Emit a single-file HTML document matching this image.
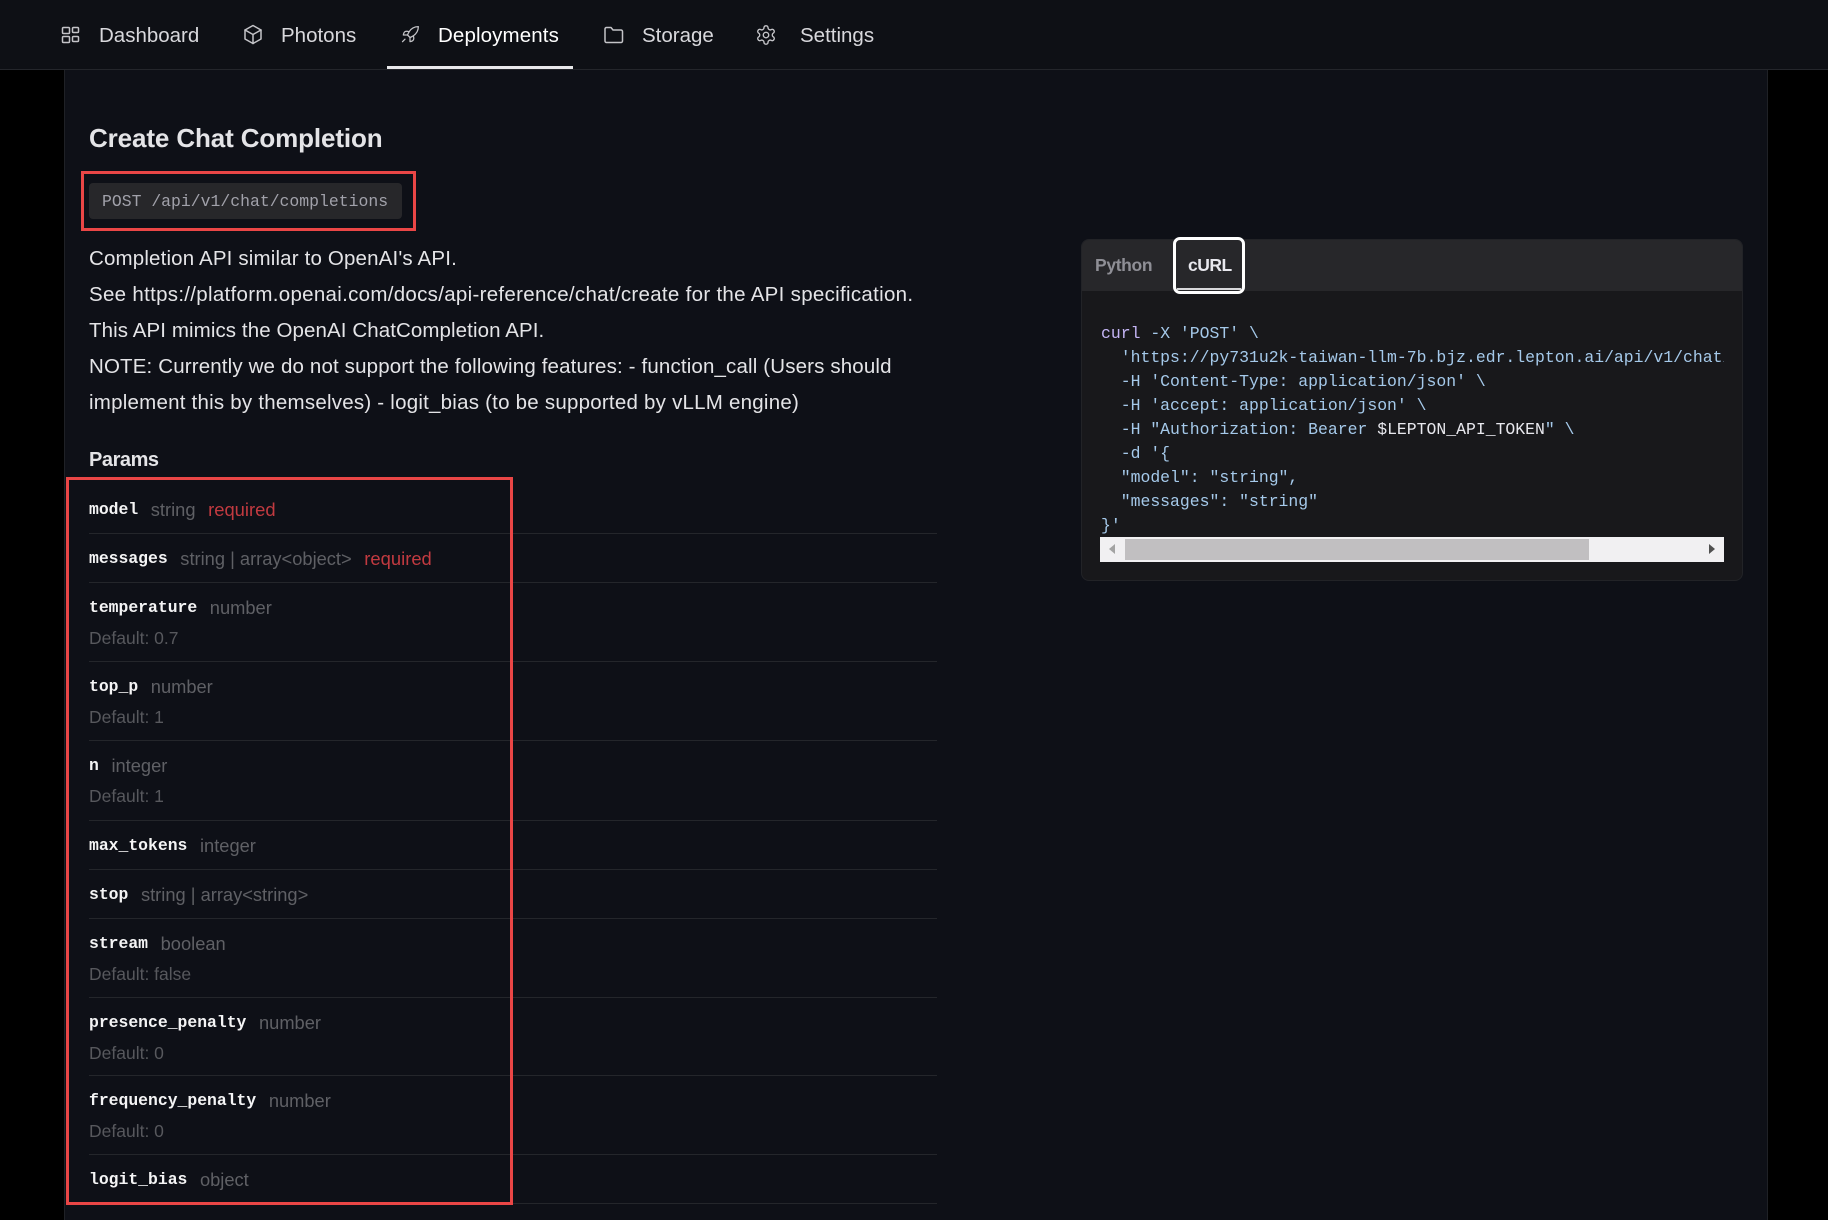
<!DOCTYPE html>
<html lang="en"><head><meta charset="utf-8"><title>Create Chat Completion</title>
<style>
*{box-sizing:border-box;margin:0;padding:0}
html,body{width:1828px;height:1220px;overflow:hidden;background:#000;font-family:"Liberation Sans",sans-serif;color:#e4e4e7}
#panel{position:absolute;left:64px;top:69px;width:1704px;height:1151px;background:#0e1017;border-left:1px solid #1f2126;border-right:1px solid #1f2126}
header{position:absolute;left:0;top:0;width:1828px;height:70px;background:#0e1015;border-bottom:1px solid #24262b}
nav a{position:absolute;top:23px;font-size:20.5px;line-height:26px;color:#d8d8dc;white-space:nowrap}
nav a.on{color:#fff}
nav svg{position:absolute;fill:none;stroke:#c4c4c8;stroke-width:1.5;stroke-linejoin:round;stroke-linecap:round}
#under{position:absolute;left:387px;top:66px;width:186px;height:3px;background:#e8e8ea}
h1{position:absolute;left:89px;top:122px;font-size:26px;line-height:32px;font-weight:bold;color:#e4e4e7;white-space:nowrap;letter-spacing:-.12px}
#ep{position:absolute;left:89px;top:183px;width:313px;height:36px;background:#27272a;border-radius:4px;color:#a1a1aa;font:16.45px/38px "Liberation Mono",monospace;padding-left:13px;white-space:nowrap}
.red{position:absolute;border:3px solid #ea4646}
p.t{position:absolute;left:89px;font-size:20.5px;line-height:36px;color:#e4e4e7;white-space:nowrap}
h2{position:absolute;left:89px;top:447px;font-size:20px;line-height:26px;font-weight:bold;color:#e4e4e7;letter-spacing:-.45px}
#rows{position:absolute;left:89px;top:485px;width:848px;list-style:none}
#rows li{height:49px;border-bottom:1px solid #24262b;padding-top:11px;white-space:nowrap;overflow:hidden}
#rows li.d{height:79px}
.l1{display:flex;gap:12.6px;align-items:center;height:27px}
.n{font:bold 16.4px/27px "Liberation Mono",monospace;color:#f4f4f5}
.ty{font-size:18.3px;line-height:27px;color:#5f6065}
.rq{font-size:18.4px;line-height:27px;color:#c23a40}
.df{font-size:17.5px;line-height:34px;color:#57585d}
#card{position:absolute;left:1081px;top:239px;width:662px;height:342px;background:#18181b;border-radius:8px;border:1px solid #222327;overflow:hidden}
#tabs{position:absolute;left:0;top:0;width:660px;height:51px;background:#27272a}
#py{position:absolute;left:13px;top:13px;font-size:17.5px;line-height:24px;font-weight:bold;color:#8f8f96;letter-spacing:-.35px}
#focus{position:absolute;left:1173px;top:237px;width:72px;height:57px;border:3px solid #fff;border-radius:7px;color:#fff}
#focus span{position:absolute;left:12px;top:13px;font-size:17.5px;line-height:24px;font-weight:bold;color:#e8e8ee;letter-spacing:-.5px}
#focus i{position:absolute;left:1px;right:1px;bottom:1px;height:2px;background:#d8d8da}
#code{position:absolute;left:1101px;top:322px;width:623px;height:215px;overflow:hidden;font:16.45px/24px "Liberation Mono",monospace;color:#a5c9ea;white-space:pre}
#code b{font-weight:normal;color:#c4b5f5}#code u{text-decoration:none;color:#e8e8ee}
#sb{position:absolute;left:1100px;top:537px;width:624px;height:25px;background:#f1f0f2}
#th{position:absolute;left:25px;top:2px;width:464px;height:21px;background:#c1bfc1}
.ar{position:absolute;top:7px;width:0;height:0;border-top:5px solid transparent;border-bottom:5px solid transparent}
</style></head><body>
<div id="panel"></div>
<header>
<nav>
<svg style="left:61px;top:26px" width="19" height="18" viewBox="0 0 19 18"><rect x="1.5" y="1.5" width="7" height="6" rx="1"/><rect x="11.5" y="1.5" width="6" height="5" rx="1"/><rect x="1.5" y="10.5" width="7" height="6" rx="1"/><rect x="11.5" y="10.5" width="6" height="5" rx="1"/></svg>
<a style="left:99px">Dashboard</a>
<svg style="left:243px;top:24px" width="20" height="21" viewBox="0 0 20 21"><path d="M10 1.5 18 6v9l-8 4.5L2 15V6z"/><path d="M2 6l8 4.5L18 6M10 10.5v9"/></svg>
<a style="left:281px">Photons</a>
<svg style="left:400px;top:25px" width="20" height="20" viewBox="0 0 24 24"><path d="m12 15-3-3a22 22 0 0 1 2-3.95A12.88 12.88 0 0 1 22 2c0 2.72-.78 7.5-6 11a22.35 22.35 0 0 1-4 2z"/><path d="M9 12H4s.55-3.03 2-4c1.62-1.08 5 0 5 0M12 15v5s3.03-.55 4-2c1.08-1.62 0-5 0-5M6 17l-3 3"/></svg>
<a class="on" style="left:438px;letter-spacing:.12px">Deployments</a>
<svg style="left:603px;top:26px" width="21" height="18" viewBox="0 0 21 18"><path d="M2 3a1.5 1.5 0 0 1 1.5-1.5H8L10 4h8a1.5 1.5 0 0 1 1.5 1.5V15a1.5 1.5 0 0 1-1.5 1.5H3.5A1.5 1.5 0 0 1 2 15z"/></svg>
<a style="left:642px">Storage</a>
<svg style="left:755px;top:24px" width="22" height="22" viewBox="0 0 24 24"><path d="M12.22 2h-.44a2 2 0 0 0-2 2v.18a2 2 0 0 1-1 1.73l-.43.25a2 2 0 0 1-2 0l-.15-.08a2 2 0 0 0-2.73.73l-.22.38a2 2 0 0 0 .73 2.73l.15.1a2 2 0 0 1 1 1.72v.51a2 2 0 0 1-1 1.74l-.15.09a2 2 0 0 0-.73 2.73l.22.38a2 2 0 0 0 2.73.73l.15-.08a2 2 0 0 1 2 0l.43.25a2 2 0 0 1 1 1.73V20a2 2 0 0 0 2 2h.44a2 2 0 0 0 2-2v-.18a2 2 0 0 1 1-1.73l.43-.25a2 2 0 0 1 2 0l.15.08a2 2 0 0 0 2.73-.73l.22-.39a2 2 0 0 0-.73-2.73l-.15-.08a2 2 0 0 1-1-1.74v-.5a2 2 0 0 1 1-1.74l.15-.09a2 2 0 0 0 .73-2.73l-.22-.38a2 2 0 0 0-2.73-.73l-.15.08a2 2 0 0 1-2 0l-.43-.25a2 2 0 0 1-1-1.73V4a2 2 0 0 0-2-2z"/><circle cx="12" cy="12" r="3"/></svg>
<a style="left:800px">Settings</a>
</nav>
<div id="under"></div>
</header>
<h1>Create Chat Completion</h1>
<div id="ep">POST /api/v1/chat/completions</div>
<div class="red" style="left:81px;top:171px;width:335px;height:60px"></div>
<p class="t" style="top:241px;letter-spacing:.16px">Completion API similar to OpenAI's API.</p>
<p class="t" style="top:277px;letter-spacing:.3px">See https://platform.openai.com/docs/api-reference/chat/create for the API specification.</p>
<p class="t" style="top:313px;letter-spacing:.09px">This API mimics the OpenAI ChatCompletion API.</p>
<p class="t" style="top:349px;letter-spacing:.15px">NOTE: Currently we do not support the following features: - function_call (Users should</p>
<p class="t" style="top:385px;letter-spacing:.23px">implement this by themselves) - logit_bias (to be supported by vLLM engine)</p>
<h2>Params</h2>
<ul id="rows">
<li><div class="l1"><span class="n">model</span><span class="ty">string</span><span class="rq">required</span></div></li>
<li><div class="l1"><span class="n">messages</span><span class="ty">string | array&lt;object&gt;</span><span class="rq">required</span></div></li>
<li class="d"><div class="l1"><span class="n">temperature</span><span class="ty">number</span></div><div class="df">Default: 0.7</div></li>
<li class="d"><div class="l1"><span class="n">top_p</span><span class="ty">number</span></div><div class="df">Default: 1</div></li>
<li class="d" style="height:80px"><div class="l1"><span class="n">n</span><span class="ty">integer</span></div><div class="df">Default: 1</div></li>
<li><div class="l1"><span class="n">max_tokens</span><span class="ty">integer</span></div></li>
<li><div class="l1"><span class="n">stop</span><span class="ty">string | array&lt;string&gt;</span></div></li>
<li class="d"><div class="l1"><span class="n">stream</span><span class="ty">boolean</span></div><div class="df">Default: false</div></li>
<li class="d" style="height:78px"><div class="l1"><span class="n">presence_penalty</span><span class="ty">number</span></div><div class="df">Default: 0</div></li>
<li class="d"><div class="l1"><span class="n">frequency_penalty</span><span class="ty">number</span></div><div class="df">Default: 0</div></li>
<li><div class="l1"><span class="n">logit_bias</span><span class="ty">object</span></div></li>
</ul>
<div class="red" style="left:66px;top:477px;width:447px;height:728px"></div>
<div id="card"><div id="tabs"><span id="py">Python</span></div></div>
<div id="focus"><span>cURL</span><i></i></div>
<div id="code"><b>curl</b> -X 'POST' \
  'https://py731u2k-taiwan-llm-7b.bjz.edr.lepton.ai/api/v1/chat/completions' \
  -H 'Content-Type: application/json' \
  -H 'accept: application/json' \
  -H "Authorization: Bearer <u>$LEPTON_API_TOKEN</u>" \
  -d '{
  "model": "string",
  "messages": "string"
}'</div>
<div id="sb"><div id="th"></div><div class="ar" style="left:9px;border-right:6px solid #a3a3a3"></div><div class="ar" style="right:9px;border-left:6px solid #505050"></div></div>
</body></html>
